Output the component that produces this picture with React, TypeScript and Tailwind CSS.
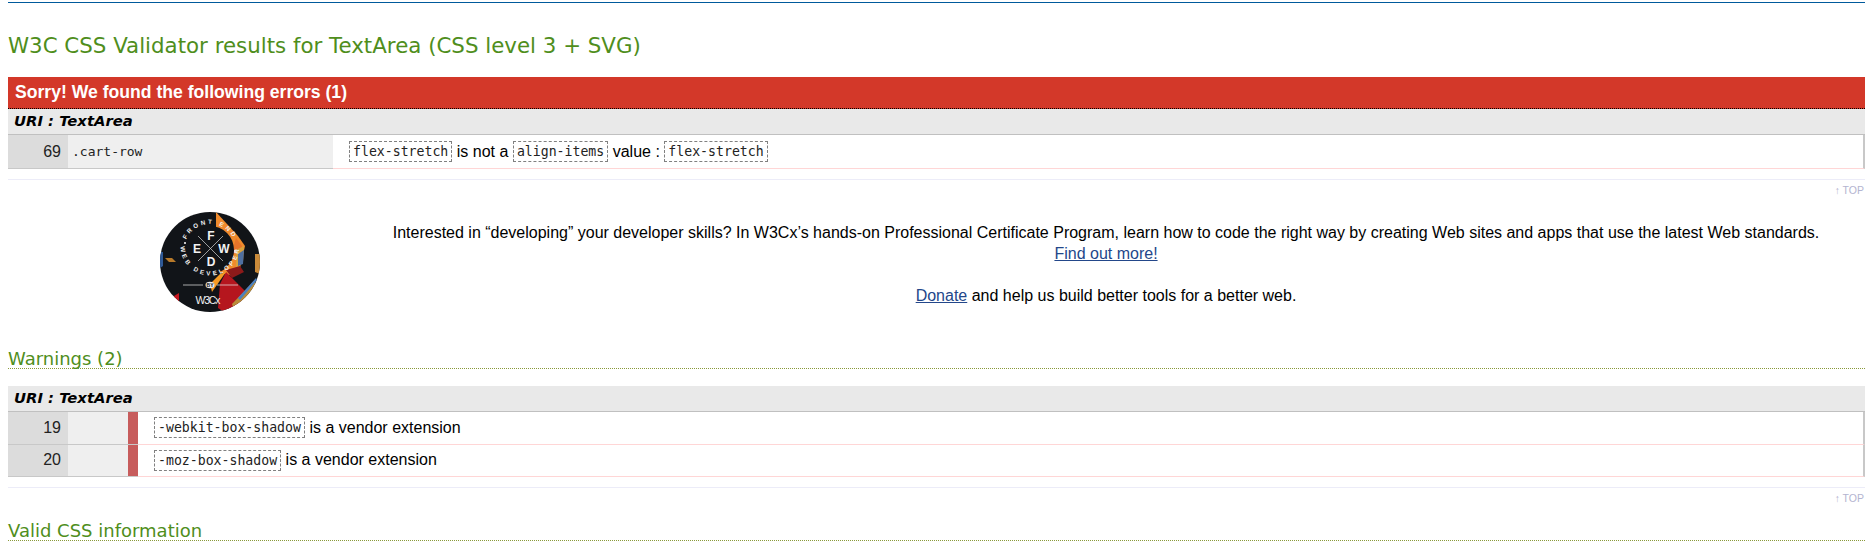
const sans = "font-['Liberation_Sans',Arial,sans-serif]";

function Code({ children }: { children: string }) {
  return (
    <span className="inline-block h-[21px] border border-dashed border-[#808080] px-[3px] font-['DejaVu_Sans_Mono',monospace] text-[13.2px] leading-[19px] text-[#222]">
      {children}
    </span>
  );
}

function Uri() {
  return (
    <div className="flex h-[26px] items-center border-b border-[#c0c0c0] bg-[#e9e9e9] pl-[6px] text-[14.8px] font-bold italic text-black font-['DejaVu_Sans',Verdana,sans-serif]">
      URI : TextArea
    </div>
  );
}

function Top() {
  return (
    <div className={`flex h-[21px] justify-end pt-[3px] pr-px text-[10.5px] leading-[14px] text-[#b4b4d0] ${sans}`}>
      ↑ TOP
    </div>
  );
}

function LogoBadge() {
  return (
    <svg width="100" height="100" viewBox="0 0 100 100" className="shrink-0">
      <defs>
        <clipPath id="c"><circle cx="50" cy="50" r="50" /></clipPath>
      </defs>
      <g clipPath="url(#c)">
        <rect width="100" height="100" fill="#111418" />
        <polygon points="56,0 78,24 85,34 80,56 72,64 60,60 56,30" fill="#f08a2c" />
        <polygon points="76,26 82,34 80,44 72,40" fill="#e8742a" />
        <polygon points="76,38 84,34 83,50 76,56" fill="#d9a23c" />
        <polygon points="78,42 84,38 83,52 78,54" fill="#4f6fa0" />
        <polygon points="66,58 80,54 84,60 72,66" fill="#8c1a1a" />
        <polygon points="66,60 88,82 74,96 64,100 58,96 60,72" fill="#b5161e" />
        <polygon points="66,60 52,80 50,72 60,62" fill="#f59a23" />
        <polygon points="72,92 95,68 96,74 74,98" fill="#b98c3a" />
        <polygon points="78,86 96,66 97,68 80,88" fill="#4a80c0" />
        <polygon points="95,42 100,42 100,62 95,60" fill="#c98a3a" />
        <polygon points="0,40 3,40 3,54 0,56" fill="#2f5a98" />
        <polygon points="5,46 12,46 16,50 9,50" fill="#b87a2a" />
        <polygon points="14,84 19,81 19,90 15,88" fill="#c4161f" />
        <circle cx="50" cy="38" r="24" fill="#111418" />
        <line x1="38" y1="24" x2="63" y2="49" stroke="#d8d8d8" strokeWidth="0.7" />
        <line x1="63" y1="24" x2="38" y2="49" stroke="#d8d8d8" strokeWidth="0.7" />
        <line x1="23" y1="73" x2="43" y2="73" stroke="#e8e8e8" strokeWidth="0.7" />
        <line x1="57" y1="73" x2="78" y2="73" stroke="#e8e8e8" strokeWidth="0.7" />
        <ellipse cx="50" cy="73" rx="4.5" ry="3.2" fill="#e8e8e8" />
        <g fill="#f2f2f2" fontFamily="'Liberation Sans',sans-serif" textAnchor="middle" fontWeight="700">
          <text x="51" y="28" fontSize="12">F</text>
          <text x="37" y="41" fontSize="12">E</text>
          <text x="64" y="41" fontSize="12">W</text>
          <text x="51" y="54" fontSize="12">D</text>
          <text x="48" y="92" fontSize="10.5" fontWeight="400" textLength="25">W3Cx</text>
          <text x="50" y="75" fontSize="5" fill="#111418">BY</text>
        </g>
        <circle cx="25" cy="31" r="1.1" fill="#eee" />
        <circle cx="75" cy="39" r="1.1" fill="#eee" />
        <path id="arcTop" d="M 24 38 A 26 26 0 0 1 76 38" fill="none" />
        <path id="arcBottom" d="M 20.5 34 A 29.5 29.5 0 1 0 79.5 34" fill="none" />
        <g fill="#f0f0f0" fontFamily="'Liberation Sans',sans-serif" fontWeight="700" fontSize="6.2" textAnchor="middle">
          <text letterSpacing="2.6"><textPath href="#arcTop" startOffset="50%">FRONT END</textPath></text>
          <text letterSpacing="2.8"><textPath href="#arcBottom" startOffset="50%">WEB DEVELOPER</textPath></text>
        </g>
      </g>
    </svg>
  );
}

function Heading({ children }: { children: string }) {
  return (
    <h2 className="h-[22px] border-b border-dotted border-[#8a9a3a] text-[18px] leading-[24px] font-normal text-[#4f8e1c] font-['DejaVu_Sans',Verdana,sans-serif]">
      {children}
    </h2>
  );
}

function WarnRow({ line, code }: { line: string; code: string }) {
  return (
    <div className={`flex h-[32.5px] ${sans} text-[16px] text-black`}>
      <div className="flex w-[60px] items-center justify-end border-b border-[#c8c8c8] bg-[#dcdcdc] pr-[7px] text-[#222]">{line}</div>
      <div className="w-[60px] border-b border-[#c8c8c8] bg-[#efefef]" />
      <div className="w-[10px] border-b border-[#c8c8c8] bg-[#c75c5c]" />
      <div className="flex flex-1 items-center gap-[4.5px] border-b border-r-2 border-b-[#ffd6d6] border-r-[#c8c8c8] pl-[16px]">
        <Code>{code}</Code>
        <span>is a vendor extension</span>
      </div>
    </div>
  );
}

export default function App() {
  return (
    <div className="h-[547px] overflow-hidden bg-white pl-[8px]">
      <div className="mt-[2px] h-px bg-[#005a9c]" />
      <h1 className="mt-[30px] h-[44px] text-[21.35px] leading-[26px] font-normal text-[#4f8e1c] font-['DejaVu_Sans',Verdana,sans-serif]">
        W3C CSS Validator results for TextArea (CSS level 3 + SVG)
      </h1>
      <div className={`flex h-[32px] items-center border-b border-dotted border-black bg-[#d33829] pl-[7px] text-[17.6px] font-bold text-white ${sans}`}>
        Sorry! We found the following errors (1)
      </div>
      <Uri />
      <div className={`flex h-[34px] ${sans} text-[16px] text-black`}>
        <div className="flex w-[60px] items-center justify-end border-b border-[#c8c8c8] bg-[#dcdcdc] pr-[7px] text-[#222]">69</div>
        <div className="flex w-[265px] items-center border-b border-[#c8c8c8] bg-[#efefef] pl-[4px] font-['DejaVu_Sans_Mono',monospace] text-[13px] text-[#222]">.cart-row</div>
        <div className="flex flex-1 items-center gap-[4.5px] border-b border-r-2 border-b-[#ffd6d6] border-r-[#c8c8c8] pl-[16px]">
          <Code>flex-stretch</Code>
          <span>is not a</span>
          <Code>align-items</Code>
          <span>value :</span>
          <Code>flex-stretch</Code>
        </div>
      </div>
      <div className="mt-[10px] h-px bg-[#ececf8]" />
      <Top />
      <div className={`flex h-[146px] items-start ${sans} text-[16px] leading-[21px] text-black`}>
        <div className="ml-[152px] mt-[11px]"><LogoBadge /></div>
        <div className="ml-[131px] flex-1 pt-[21px] pr-[44px] text-center">
          <p>Interested in “developing” your developer skills? In W3Cx’s hands-on Professional Certificate Program, learn how to code the right way by creating Web sites and apps that use the latest Web standards.</p>
          <p><a className="text-[#23478a] underline">Find out more!</a></p>
          <p className="mt-[21px]"><a className="text-[#23478a] underline">Donate</a> and help us build better tools for a better web.</p>
        </div>
      </div>
      <Heading>Warnings (2)</Heading>
      <div className="mt-[17px]">
        <Uri />
        <WarnRow line="19" code="-webkit-box-shadow" />
        <WarnRow line="20" code="-moz-box-shadow" />
      </div>
      <div className="mt-[10px] h-px bg-[#ececf8]" />
      <Top />
      <div className="mt-[10px]"><Heading>Valid CSS information</Heading></div>
    </div>
  );
}
